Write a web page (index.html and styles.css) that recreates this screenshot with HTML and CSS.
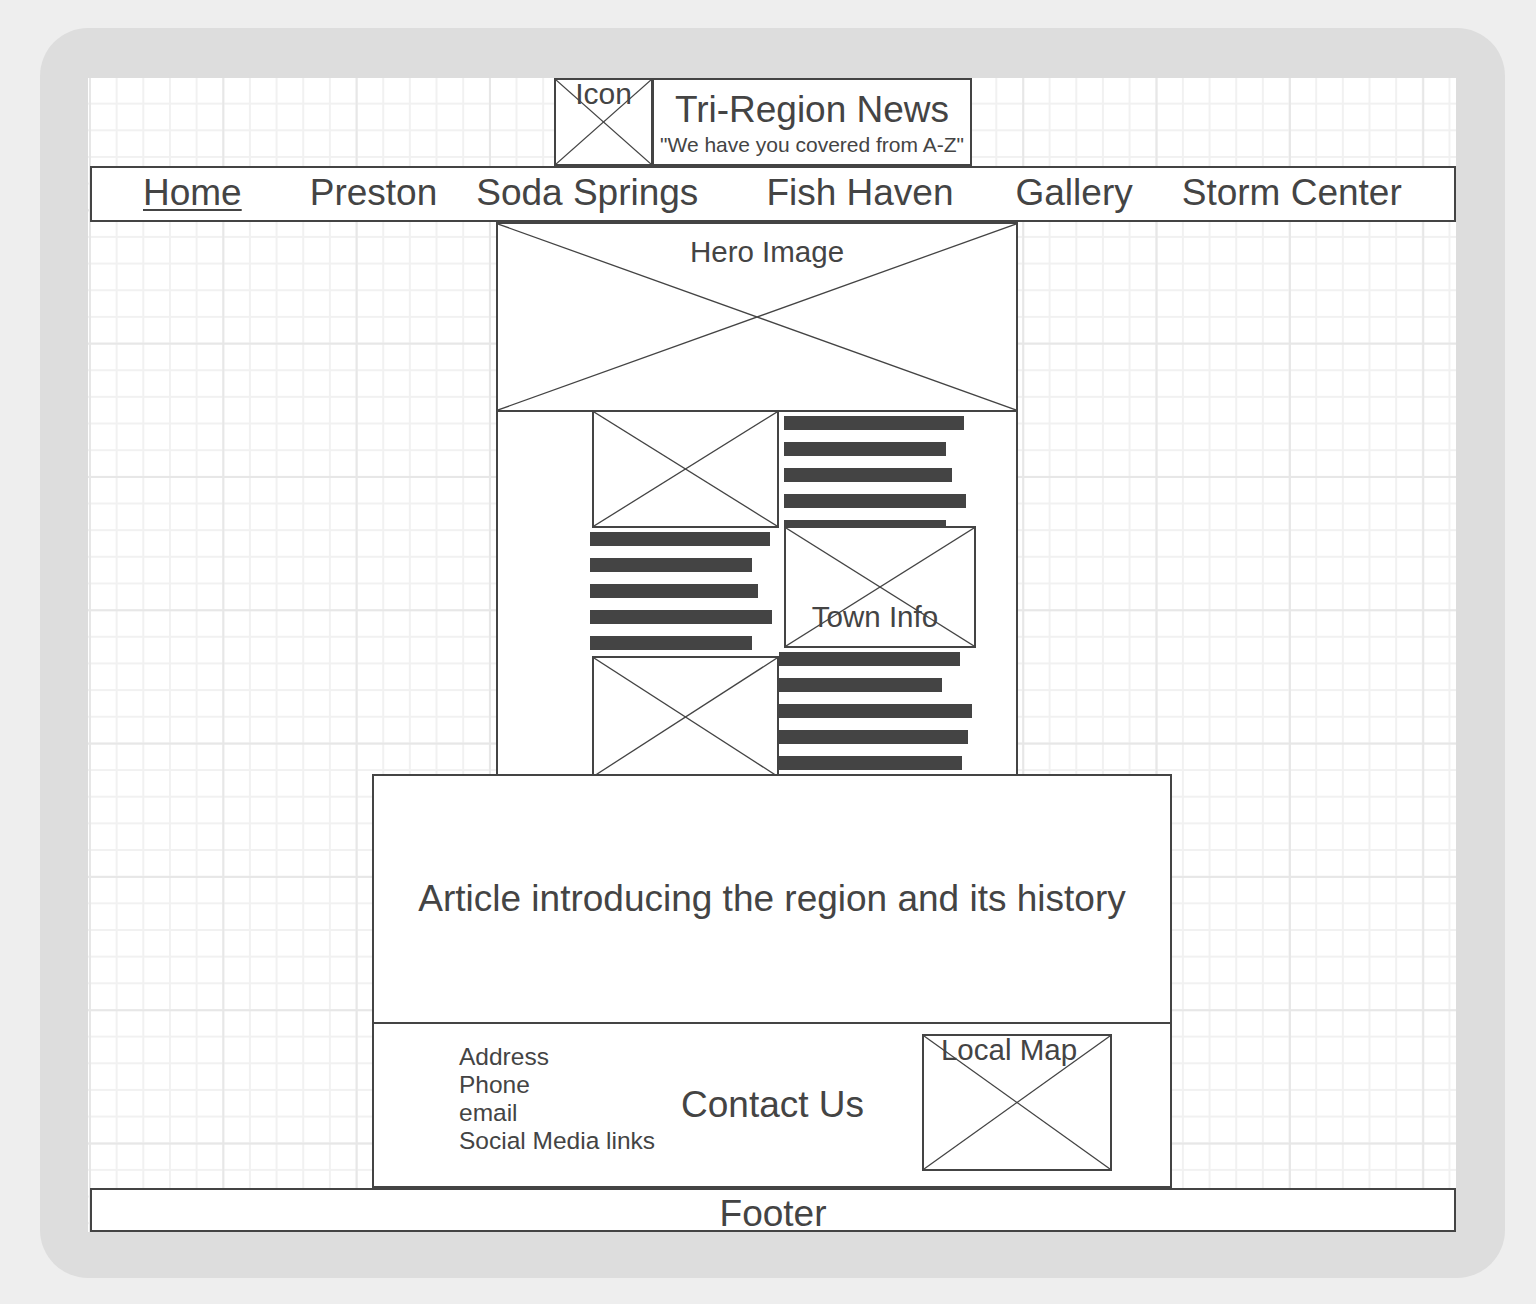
FILE: index.html
```html
<!DOCTYPE html>
<html lang="en">
  <head>
    <meta charset="UTF-8" />
    <meta name="viewport" content="width=device-width, initial-scale=1.0" />
    <title>Tri-Region News - Wireframe</title>
    <link rel="stylesheet" href="styles.css">
  </head>
  <body>
    <div class="frame">
      <div class="canvas">
        <header class="brand">
          <div class="box icon-box">
            <svg class="cross"><line x1="0" y1="0" x2="100%" y2="100%" /><line x1="100%" y1="0" x2="0" y2="100%" /></svg>
            <span class="label icon-label">Icon</span>
          </div>
          <div class="box title-box">
            <h1 class="site-title">Tri-Region News</h1>
            <p class="tagline">"We have you covered from A-Z"</p>
          </div>
        </header>

        <nav class="nav">
          <a class="nav-link active" href="#">Home</a>
          <a class="nav-link" href="#">Preston</a>
          <a class="nav-link" href="#">Soda Springs</a>
          <a class="nav-link" href="#">Fish Haven</a>
          <a class="nav-link" href="#">Gallery</a>
          <a class="nav-link" href="#">Storm Center</a>
        </nav>

        <div class="box hero">
          <svg class="cross"><line x1="0" y1="0" x2="100%" y2="100%" /><line x1="100%" y1="0" x2="0" y2="100%" /></svg>
          <span class="label">Hero Image</span>
        </div>

        <section class="features">
          <div class="row row-a">
            <div class="box thumb">
              <svg class="cross"><line x1="0" y1="0" x2="100%" y2="100%" /><line x1="100%" y1="0" x2="0" y2="100%" /></svg>
            </div>
            <div class="lines lines-a">
              <div class="bar" style="width: 180px"></div>
              <div class="bar" style="width: 162px"></div>
              <div class="bar" style="width: 168px"></div>
              <div class="bar" style="width: 182px"></div>
              <div class="bar" style="width: 162px"></div>
            </div>
          </div>

          <div class="row row-b">
            <div class="lines lines-b">
              <div class="bar" style="width: 180px"></div>
              <div class="bar" style="width: 162px"></div>
              <div class="bar" style="width: 168px"></div>
              <div class="bar" style="width: 182px"></div>
              <div class="bar" style="width: 162px"></div>
            </div>
            <div class="box town">
              <svg class="cross"><line x1="0" y1="0" x2="100%" y2="100%" /><line x1="100%" y1="0" x2="0" y2="100%" /></svg>
              <span class="label">Town Info</span>
            </div>
          </div>

          <div class="row row-c">
            <div class="box thumb thumb-low">
              <svg class="cross"><line x1="0" y1="0" x2="100%" y2="100%" /><line x1="100%" y1="0" x2="0" y2="100%" /></svg>
            </div>
            <div class="lines lines-c">
              <div class="bar" style="width: 181px"></div>
              <div class="bar" style="width: 163px"></div>
              <div class="bar" style="width: 193px"></div>
              <div class="bar" style="width: 189px"></div>
              <div class="bar" style="width: 183px"></div>
            </div>
          </div>
        </section>

        <article class="article">
          <div class="intro">Article introducing the region and its history</div>
          <div class="contact">
            <ul class="contact-list">
              <li>Address</li>
              <li>Phone</li>
              <li>email</li>
              <li>Social Media links</li>
            </ul>
            <h2 class="contact-title">Contact Us</h2>
            <div class="box map">
              <svg class="cross"><line x1="0" y1="0" x2="100%" y2="100%" /><line x1="100%" y1="0" x2="0" y2="100%" /></svg>
              <span class="label">Local Map</span>
            </div>
          </div>
        </article>

        <footer class="footer">Footer</footer>
      </div>
    </div>
  </body>
</html>
```

FILE: styles.css
```css
* {
  box-sizing: border-box;
}

body {
  margin: 0;
  background: #eeeeee;
  font-family: "Liberation Sans", Arial, sans-serif;
  color: #444444;
}

.frame {
  width: 1465px;
  margin: 28px 0 0 40px;
  padding: 50px 49px 46px 48px;
  background: #dddddd;
  border-radius: 48px;
}

.canvas {
  width: 1368px;
  height: 1154px;
  background-color: #ffffff;
  background-image:
    linear-gradient(to right, #e7e7e7 2px, transparent 2px),
    linear-gradient(to bottom, #e7e7e7 2px, transparent 2px),
    linear-gradient(to right, #f1f1f1 2px, transparent 2px),
    linear-gradient(to bottom, #f1f1f1 2px, transparent 2px);
  background-size: 133.33px 133.33px, 133.33px 133.33px, 26.667px 26.667px, 26.667px 26.667px;
  background-position: 1px -2px;
}

/* generic placeholder box with an X */
.box {
  position: relative;
  background: #ffffff;
  border: 2px solid #444444;
}

.cross {
  position: absolute;
  top: 0;
  left: 0;
  width: 100%;
  height: 100%;
}

.cross line {
  stroke: #444444;
  stroke-width: 1.3;
}

.label {
  position: relative;
  display: block;
  font-size: 29.5px;
  line-height: 34px;
  text-align: center;
}

/* header */
.brand {
  display: flex;
  padding-left: 466px;
  height: 88px;
}

.icon-box {
  width: 99px;
  height: 88px;
}

.icon-label {
  margin-top: -3px;
  font-size: 30px;
}

.title-box {
  width: 320px;
  height: 88px;
  margin-left: -1px;
  padding-top: 9px;
  text-align: center;
}

.site-title {
  margin: 0;
  font-size: 37px;
  font-weight: normal;
  line-height: 42px;
}

.tagline {
  margin: 2px 0 0;
  font-size: 21px;
  line-height: 24px;
}

/* navigation */
.nav {
  display: flex;
  width: 1366px;
  height: 56px;
  margin-left: 2px;
  padding-top: 4px;
  background: #ffffff;
  border: 2px solid #444444;
}

.nav-link {
  font-size: 37px;
  line-height: 42px;
  color: #444444;
  text-decoration: none;
}

.nav-link.active {
  text-decoration: underline;
  text-underline-offset: 4px;
  text-decoration-thickness: 2px;
}

.nav-link:nth-child(1) { margin-left: 51px; }
.nav-link:nth-child(2) { margin-left: 68px; }
.nav-link:nth-child(3) { margin-left: 39px; }
.nav-link:nth-child(4) { margin-left: 68px; }
.nav-link:nth-child(5) { margin-left: 62px; }
.nav-link:nth-child(6) { margin-left: 49px; }

/* hero column */
.hero {
  width: 522px;
  height: 190px;
  margin-left: 408px;
  padding: 11px 0 0 20px;
}

.features {
  display: flow-root;
  width: 522px;
  height: 362px;
  margin-left: 408px;
  background: #ffffff;
  border-left: 2px solid #444444;
  border-right: 2px solid #444444;
}

.row {
  display: flex;
  align-items: flex-start;
}

.row-a {
  height: 118px;
  margin-top: -2px;
}

.row-b {
  height: 128px;
}

.row-c {
  height: 118px;
}

.thumb {
  width: 187px;
  height: 118px;
  margin-left: 94px;
}

.thumb-low {
  height: 122px;
}

.lines {
  flex-shrink: 0;
}

.lines-a {
  margin-left: 5px;
  padding-top: 6px;
}

.lines-b {
  width: 182px;
  margin-left: 92px;
  padding-top: 4px;
}

.lines-c {
  margin-top: -4px;
}

.bar {
  height: 14px;
  margin-bottom: 12px;
  background: #444444;
}

.town {
  display: flex;
  flex-direction: column;
  justify-content: flex-end;
  width: 192px;
  height: 122px;
  margin-top: -2px;
  margin-left: 12px;
  padding: 0 10px 12px 0;
}

/* article + contact */
.article {
  position: relative;
  width: 800px;
  margin-left: 284px;
  background: #ffffff;
  border: 2px solid #444444;
  border-bottom-width: 3px;
}

.intro {
  display: flex;
  align-items: center;
  justify-content: center;
  height: 248px;
  font-size: 37px;
  border-bottom: 2px solid #444444;
}

.contact {
  display: flex;
  align-items: center;
  height: 162px;
}

.contact-list {
  width: 196px;
  margin: 0 0 12px 85px;
  padding: 0;
  list-style: none;
  font-size: 24.5px;
  line-height: 28px;
  white-space: nowrap;
}

.contact-title {
  margin: 0 0 0 26px;
  font-size: 37px;
  font-weight: normal;
  white-space: nowrap;
}

.map {
  width: 190px;
  height: 137px;
  margin: 0 58px 5px auto;
  padding-right: 16px;
}

.map .label {
  margin-top: -3px;
}

/* footer */
.footer {
  position: relative;
  width: 1366px;
  height: 44px;
  margin: -1px 0 0 2px;
  padding-top: 4px;
  background: #ffffff;
  border: 2px solid #444444;
  font-size: 37px;
  line-height: 40px;
  text-align: center;
}
```
